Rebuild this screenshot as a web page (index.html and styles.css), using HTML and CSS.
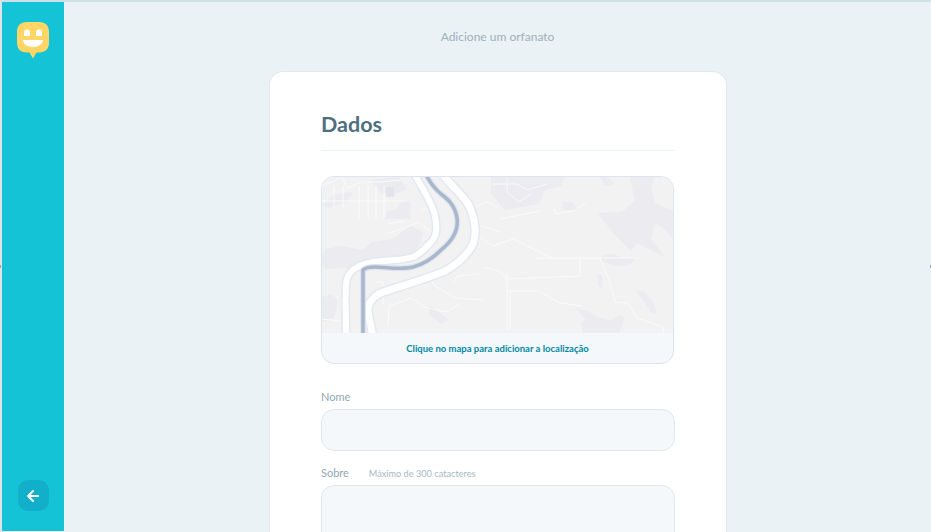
FILE: index.html
```html
<!doctype html>
<html lang="pt-BR">
  <head>
    <meta charset="UTF-8" />
    <meta name="viewport" content="width=device-width, initial-scale=1.0" />
    <title>Adicione um orfanato</title>
    <link rel="stylesheet" href="styles.css">
  </head>
  <body>
    <div id="app" class="page">
      <aside class="sidebar">
        <svg class="logo" viewBox="0 0 32 37" width="32" height="37">
          <path fill="#ffd666" d="M10 0h12c6.500 0 10 3.500 10 10v10.500c0 6.500-3.500 10-10 10h-2.500L16 36.500l-3.500-6H10c-6.500 0-10-3.500-10-10V10C0 3.500 3.500 0 10 0z" />
          <path fill="#fff" d="M7 14v-3.500a3 3 0 0 1 6 0V14zM19 14v-3.500a3 3 0 0 1 6 0V14zM6 18h20c0 4-4.500 7-10 7S6 22 6 18z" />
        </svg>
        <button class="back-btn" type="button" aria-label="Voltar">
          <svg viewBox="0 0 14 14" width="14" height="14">
            <path fill="none" stroke="#fff" stroke-width="2" stroke-linecap="round" stroke-linejoin="round" d="M12 7H2M7 2L2 7l5 5" />
          </svg>
        </button>
      </aside>

      <main class="content">
        <header class="topbar">Adicione um orfanato</header>

        <form class="card">
          <h2 class="card-title">Dados</h2>

          <div class="map-box">
            <svg class="map" viewBox="0 0 353 157" width="353" height="157" preserveAspectRatio="none">
              <rect width="353" height="157" fill="#f2f2f3" />
              <g fill="#ebebf0">
                <path d="M4 73l16-3 22 4 8-8 22-3 18-14 12 8-8 22-18 8-28 0-6 4-38 2-4-8z" />
                <path d="M63 43l4-8 10-2 3-8 10 0-1 18z" />
                <path d="M50 4l28-3 8 12-14 6-12-2z" />
                <path d="M0 122l10-4 7 6-4 18-13 4z" />
                <path d="M0 30l14-12 18-2-6 10-18 6z" />
                <path d="M170 1l52 0 22-1-4 10-16 4-6 14-34 6-14-16z" />
                <path d="M241 26h10l6 8-14 0z" />
                <path d="M279 1h8l6 7-9 2z" />
                <path d="M277 37l20-1 5-1 12-10-2-10-3-14h24l-3 12 4 14 18 8v28l-8-10-10-6-4 16 14 18-16-8-12-6-6 8-18-18z" />
                <path d="M254 131l12 4 10 6 14 4 8-6 6 2-6 16h-36l-2-10 4-4z" />
                <path d="M314 114l10 2 8 10 4 12-6-2-8-12z" />
                <path d="M276 98l5 2 1 12-5-2z" />
                <path d="M281 80l12-2 8 4h14l-6 6-12 2-6-1-11-4z" />
                <path d="M108 130l10 6 10 8-8 4-12-10z" />
              </g>
              <path fill="#e3e3eb" d="M65 11h8v10h-8z" />
              <g fill="none" stroke="#fbfbfc" stroke-width="1" stroke-linejoin="round" stroke-linecap="round">
                <path d="M0 25h85M13 10v22M22 10v22M38 10v32M47 10v32M55 10v32M63 10v32M0 10l13-5 7-5 6 12 14-6 20 0 20-2M67 48l16-3" />
                <path d="M66 58l18-6 14-6 14 12M100 34l14-2" />
                <path d="M179 43l40-8M232 31l3 7 17-3 13-8M172 8h24l10 6 20-6M186 2v14l12 10 12-8" />
                <path d="M157 60l15 10 20-7 14 7 25 12h86M214 82h17" />
                <path d="M259 82v18l-73 3-8-8-16-4M186 97v57M189 117v37M186 115h31l22 12 22 3" />
                <path d="M279 82l10 25 5 19 13 1 9 15 6 2 20 7v6" />
                <path d="M55 106h7v22M67 150l1-20 22-8 16 10 20 4 12-8M0 143l20 2M108 100l6 10 20 12 28 2M133 106l3-6 22-2" />
                <path d="M155 30l12-4 10 6M160 50l20 6" />
              </g>
              <g fill="none" stroke-linejoin="round">
                <path stroke="#e3e8f0" stroke-width="9" d="M94 -1C102 14 112 28 114 40C116 52 116 58 112 64C106 70 100 78 92 81C80 85 60 84 48 87C34 90 26 96 25 108C24 122 25 140 25 158" />
                <path stroke="#fff" stroke-width="6" d="M94 -1C102 14 112 28 114 40C116 52 116 58 112 64C106 70 100 78 92 81C80 85 60 84 48 87C34 90 26 96 25 108C24 122 25 140 25 158" />
                <path stroke="#e3e8f0" stroke-width="10" d="M122 -1C132 12 146 22 150 34C154 46 156 58 152 68C146 80 136 88 124 95C108 102 80 110 62 116C52 120 46 128 47 136C48 144 51 150 51 158" />
                <path stroke="#fff" stroke-width="7" d="M122 -1C132 12 146 22 150 34C154 46 156 58 152 68C146 80 136 88 124 95C108 102 80 110 62 116C52 120 46 128 47 136C48 144 51 150 51 158" />
                <path stroke="#dfe5ee" stroke-width="6" d="M105 -1C110 8 114 13 120 18C128 24 134 30 136 42C138 56 130 66 120 74C112 82 104 88 92 91C80 94 66 91 54 91C48 91 44 92 42 94V158" />
                <path stroke="#a9b7cd" stroke-width="3.500" d="M105 -1C110 8 114 13 120 18C128 24 134 30 136 42C138 56 130 66 120 74C112 82 104 88 92 91C80 94 66 91 54 91C48 91 44 92 42 94V158" />
              </g>
            </svg>
            <p class="map-hint">Clique no mapa para adicionar a localização</p>
          </div>

          <div class="field">
            <label class="field-label" for="nome">Nome</label>
            <input class="field-input" id="nome" type="text" />
          </div>

          <div class="field">
            <label class="field-label" for="sobre">Sobre <span class="field-note">Máximo de 300 catacteres</span></label>
            <textarea class="field-input field-text" id="sobre"></textarea>
          </div>
        </form>
      </main>
      <i class="tick tick-left"></i>
      <i class="tick tick-right"></i>
    </div>
  </body>
</html>
```

FILE: styles.css
```css
* {
  box-sizing: border-box;
}
html,
body {
  height: 100%;
  margin: 0;
  overflow: hidden;
}
body {
  background-color: #ebf2f5;
  color: #5c8599;
  font-family: "Lato", "Open Sans", sans-serif;
}
.page {
  position: relative;
  display: flex;
  height: 532px;
  border-top: 2px solid #cfe0e8;
  border-left: 2px solid #dde5ea;
}
.sidebar {
  flex: 0 0 62px;
  height: 529px;
  padding: 20px 15px;
  display: flex;
  flex-direction: column;
  justify-content: space-between;
  align-items: center;
  background-color: #15c3d6;
}
.logo {
  display: block;
}
.back-btn {
  width: 31px;
  height: 31px;
  padding: 0;
  display: flex;
  align-items: center;
  justify-content: center;
  border: none;
  border-radius: 10px;
  background-color: #12afcb;
}
.content {
  flex: 1;
  min-width: 0;
  height: 530px;
  overflow: hidden;
}
.topbar {
  height: 69px;
  padding-top: 27px;
  text-align: center;
  font-size: 12px;
  line-height: 15px;
  color: #9db1bc;
}
.card {
  width: 458px;
  height: 461px;
  margin-left: 205px;
  padding: 37px 51px 0;
  background-color: #fff;
  border: 1px solid #dfeaee;
  border-bottom: none;
  border-radius: 14px 14px 0 0;
}
.card-title {
  width: 353px;
  margin: 0 0 25px;
  padding-bottom: 11px;
  font-size: 21.500px;
  line-height: 30px;
  font-weight: 700;
  color: #4d6f80;
  border-bottom: 1px solid #ebf2f5;
}
.map-box {
  width: 353px;
  height: 188px;
  overflow: hidden;
  background-color: #f5f8fa;
  border: 1px solid #dde3f0;
  border-radius: 13px;
  margin-bottom: 26px;
}
.map {
  display: block;
  margin: -1px -1px 0;
  filter: blur(0.4px);
}
.map-hint {
  margin: 0;
  padding-top: 9px;
  text-align: center;
  font-size: 9.500px;
  line-height: 14px;
  font-weight: 700;
  color: #0089a5;
}
.field {
  margin-bottom: 15px;
}
.field-label {
  display: block;
  margin-bottom: 6px;
  font-size: 11px;
  line-height: 13px;
  color: #8fa7b3;
}
.field-note {
  margin-left: 17px;
  font-size: 9.200px;
  line-height: 9px;
  color: #a8b9c3;
}
.field-input {
  display: block;
  width: 354px;
  height: 42px;
  background-color: #f5f8fa;
  border: 1px solid #dfe8ec;
  border-radius: 13px;
  outline: none;
}
.field-text {
  height: 120px;
  resize: none;
}
.tick {
  position: absolute;
  top: 263px;
  width: 1px;
  height: 3px;
  background-color: #9aa5ab;
}
.tick-left {
  left: -2px;
}
.tick-right {
  right: 0;
}
```
